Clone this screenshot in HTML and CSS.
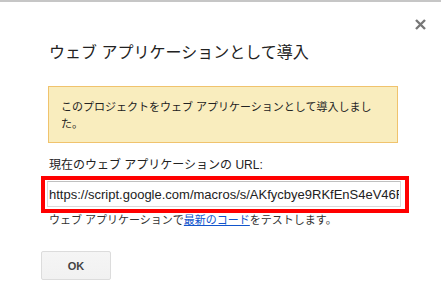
FILE: index.html
```html
<!doctype html>
<html lang="ja">
  <head>
    <meta charset="UTF-8" />
    <meta name="viewport" content="width=device-width, initial-scale=1.0" />
    <title>ウェブ アプリケーションとして導入</title>
    <link rel="stylesheet" href="styles.css">
  </head>
  <body>
    <div class="dialog">
      <button class="close-btn" aria-label="閉じる">
        <svg width="11" height="11" viewBox="0 0 11 11">
          <path d="M1 1 L10 10 M10 1 L1 10" stroke="#777" stroke-width="2.4" />
        </svg>
      </button>

      <h1 class="dialog-title">ウェブ アプリケーションとして導入</h1>

      <div class="notice">
        このプロジェクトをウェブ アプリケーションとして導入しました。
      </div>

      <div class="field-label">現在のウェブ アプリケーションの URL:</div>
      <div class="highlight">
        <input
          type="text"
          class="url-input"
          value="https://script.google.com/macros/s/AKfycbye9RKfEnS4eV46FvQmXk3Lp/exec"
          readonly />
      </div>
      <div class="hint">
        ウェブ アプリケーションで<a href="#">最新のコード</a>をテストします。
      </div>

      <button class="ok-btn">OK</button>
    </div>
  </body>
</html>
```

FILE: styles.css
```css
* {
  box-sizing: border-box;
}

body {
  margin: 0;
  background-color: #ffffff;
  font-family: "Liberation Sans", "Noto Sans CJK JP", Arial, sans-serif;
  color: #222;
}

.dialog {
  position: relative;
  width: 441px;
  height: 306px;
  border-top: 2px solid #c6c6c6;
  padding: 43px 0 0 49px;
}

.close-btn {
  position: absolute;
  top: 17px;
  left: 415px;
  width: 11px;
  height: 11px;
  padding: 0;
  border: none;
  background: none;
  cursor: pointer;
}

.close-btn svg {
  display: block;
}

.dialog-title {
  margin: 0;
  font-size: 16px;
  line-height: 16px;
  font-weight: normal;
  color: #222;
}

.notice {
  margin: 25px 0 0 -1px;
  width: 350px;
  padding: 12px 23px 9px 12px;
  background-color: #f9edbe;
  border: 1px solid #f0c36d;
  font-size: 11px;
  line-height: 17px;
  color: #222;
}

.field-label {
  margin-top: 15px;
  font-size: 12px;
  line-height: 14px;
  color: #222;
}

.highlight {
  margin: 4px 0 0 -8px;
  width: 368px;
  padding: 1px 4px 2px 2px;
  border: 4px solid #ff0000;
}

.url-input {
  display: block;
  width: 354px;
  height: 26px;
  padding: 0 1px;
  border: 1px solid #d9d9d9;
  border-top-color: #c0c0c0;
  font-family: "Liberation Sans", Arial, sans-serif;
  font-size: 13px;
  color: #222;
  outline: none;
}

.hint {
  font-size: 11px;
  line-height: 14px;
  color: #333;
}

.hint a {
  color: #15c;
  text-decoration: underline;
}

.ok-btn {
  display: block;
  margin: 24px 0 0 -8px;
  width: 70px;
  height: 29px;
  border: 1px solid #dcdcdc;
  border-radius: 2px;
  background: linear-gradient(#f5f5f5, #f1f1f1);
  font-family: "Liberation Sans", Arial, sans-serif;
  font-size: 11px;
  font-weight: bold;
  color: #444;
  cursor: pointer;
}
```
